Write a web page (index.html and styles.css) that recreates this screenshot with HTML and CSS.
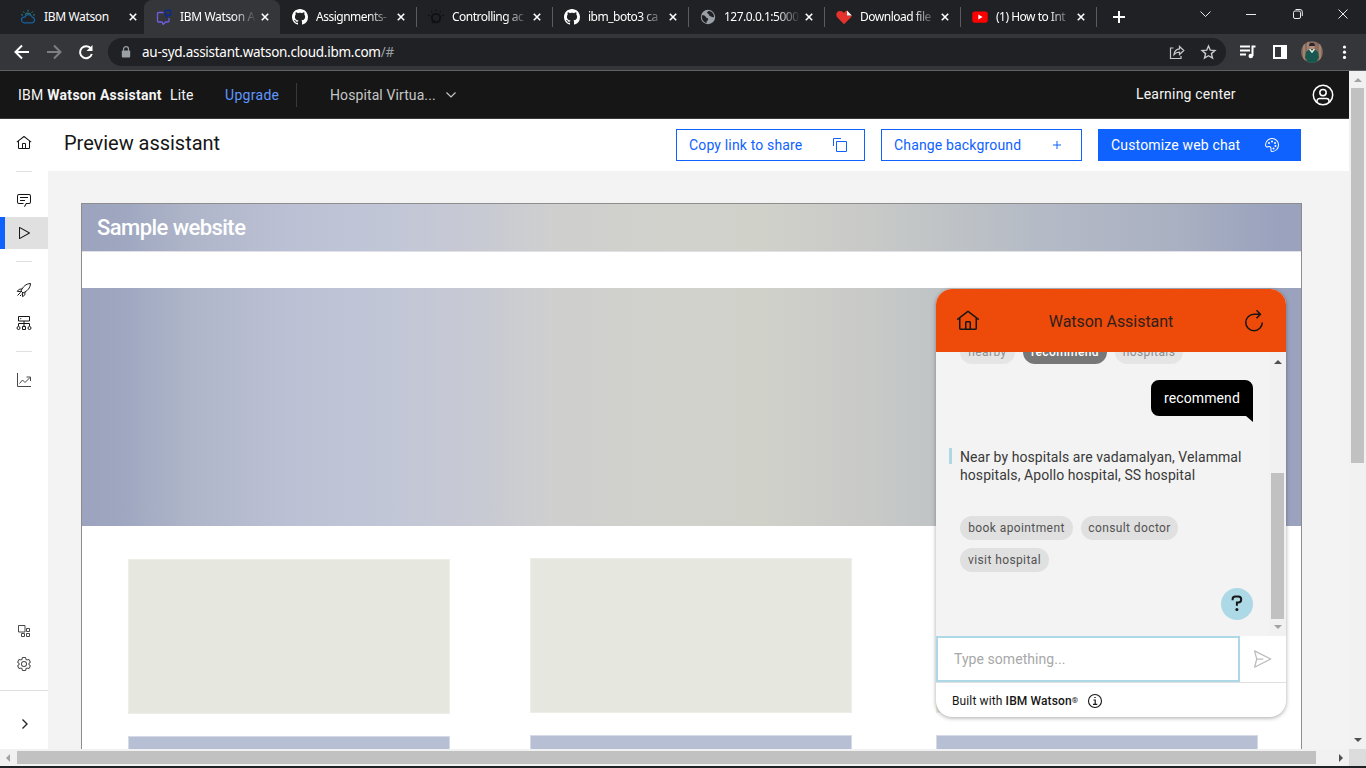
FILE: index.html
```html
<!DOCTYPE html>
<html lang="en">
<head>
<meta charset="utf-8">
<title>IBM Watson Assistant</title>
<link rel="stylesheet" href="styles.css">
</head>
<body>
<svg class="defs" width="0" height="0">
  <defs>
    <symbol id="close" viewBox="0 0 8 8"><path d="M.8.8l6.4 6.4M7.200.8L.8 7.200" stroke="#fff" stroke-width="1.6"/></symbol>
    <symbol id="github" viewBox="0 0 16 16"><path fill="#fff" d="M8 0C3.580 0 0 3.580 0 8c0 3.540 2.290 6.530 5.470 7.590.4.070.55-.17.55-.38 0-.19-.01-.82-.01-1.490-2.010.37-2.530-.49-2.690-.94-.09-.23-.48-.94-.82-1.130-.28-.15-.68-.52-.01-.53.63-.01 1.080.58 1.230.82.72 1.210 1.870.87 2.330.66.070-.52.28-.87.51-1.070-1.780-.2-3.640-.89-3.640-3.950 0-.87.31-1.590.82-2.150-.08-.2-.36-1.020.08-2.120 0 0 .67-.21 2.200.82.64-.18 1.320-.27 2-.27s1.360.09 2 .27c1.530-1.040 2.200-.82 2.200-.82.44 1.100.16 1.920.08 2.120.51.56.82 1.270.82 2.150 0 3.070-1.870 3.750-3.650 3.950.29.25.54.73.54 1.480 0 1.070-.01 1.930-.01 2.200 0 .21.15.46.55.38A8.010 8.010 0 0 0 16 8c0-4.420-3.580-8-8-8z"/></symbol>
    <symbol id="home" viewBox="0 0 32 32"><path d="M16.6123,2.2138a1.010,1.010,0,0,0-1.2427,0L1,13.4194l1.2427,1.5717L4,13.6208V26a2.0041,2.0041,0,0,0,2,2H26a2.0037,2.0037,0,0,0,2-2V13.630L29.7573,15,31,13.4282ZM18,26H14V18h4Zm2,0V18a2.0023,2.0023,0,0,0-2-2H14a2.002,2.002,0,0,0-2,2v8H6V12.0615l10-7.790,10,7.8005V26Z"/></symbol>
  </defs>
</svg>
<div class="browser">
  <div class="tabs">
    <div class="tab first">
      <svg class="fav" viewBox="0 0 16 16" fill="none" stroke-width="1.300"><path d="M4 13.800a2.900 2.900 0 0 1-.6-5.600q.8-.2 1.400 0a4 4 0 0 1 7.400-.2 3 3 0 0 1 .2 5.800z" stroke="#17609a"/><path d="M1 5.500l1.800.8M3.200 2.500l1.100 1.300M8 .8v1.800M12.800 2.500l-1.100 1.300M15 5.500l-1.800.8M5 5.500a4 4 0 0 1 6 0" stroke="#2b8a8c" stroke-width="1"/></svg>
      <span class="tab-title">IBM Watson</span><svg class="x"><use href="#close"/></svg>
    </div>
    <div class="tab active">
      <svg class="fav" viewBox="0 0 16 16" fill="none"><path d="M7.500 3.500H2.500a1 1 0 0 0-1 1v7.500a1 1 0 0 0 1 1h3.500l1.200 2.500L9.500 13H12a1 1 0 0 0 1-1V9" stroke="#6f5fe0" stroke-width="1.300"/><path d="M9.200 1.500h5.500v4.500h-2.500l-1.700 1.800V6H9.200z" stroke="#0b2a8a" stroke-width="1.300"/></svg>
      <span class="tab-title fade">IBM Watson A</span><svg class="x"><use href="#close"/></svg>
    </div>
    <div class="tab t3"><svg class="fav"><use href="#github"/></svg><span class="tab-title fade">Assignments-</span><svg class="x"><use href="#close"/></svg></div>
    <div class="tab sep">
      <svg class="fav" viewBox="0 0 16 16" fill="none" stroke="#101113"><circle cx="8" cy="9" r="4.200" stroke-width="2"/><path d="M0 6l1.800.8M3 2l1.200 1.500M8 .5v2M13 2l-1.200 1.500M16 6l-1.800.8M4 14l2.500-3" stroke-width="1.200"/></svg>
      <span class="tab-title fade">Controlling ac</span><svg class="x"><use href="#close"/></svg>
    </div>
    <div class="tab sep"><svg class="fav"><use href="#github"/></svg><span class="tab-title fade">ibm_boto3 ca</span><svg class="x"><use href="#close"/></svg></div>
    <div class="tab sep">
      <svg class="fav" viewBox="0 0 16 16"><circle cx="8" cy="8" r="7.200" fill="#9aa0a6"/><path d="M1.800 6.500c2-.5 3.500.3 4 1.500s2.500.7 2.400 2.300-1.700 1.200-1.700 3.700c-3-.7-5-3.500-4.700-7.500zM8.500 2c-1.500 1-2 2.200-.5 2.700s.5 1.800 2 2.300 1.800 1.500 4 1.200C14.200 4.500 11.500 2 8.500 2z" fill="#202124"/></svg>
      <span class="tab-title fade">127.0.0.1:5000</span><svg class="x"><use href="#close"/></svg>
    </div>
    <div class="tab sep">
      <svg class="fav" viewBox="0 0 16 16"><path d="M8 15.200L1.200 8.300C-.8 5.500.8 2 4 2c1.800 0 3 .8 4 2 .7-1.200 1.800-2.300 3-2.500v5h4.800c-.2 1-.6 1.600-1.200 2.200z" fill="#e5322d"/><path d="M11 1.500l4.800 5H11z" fill="#fff"/></svg>
      <span class="tab-title fade">Download file</span><svg class="x"><use href="#close"/></svg>
    </div>
    <div class="tab sep">
      <svg class="fav" viewBox="0 0 16 16"><rect x=".3" y="2.500" width="15.400" height="11.200" rx="2.500" fill="#f00"/><path d="M6.300 5.600v5l4.300-2.500z" fill="#fff"/></svg>
      <span class="tab-title fade">(1) How to Int</span><svg class="x"><use href="#close"/></svg>
    </div>
    <div class="newtab"><svg width="12" height="12" viewBox="0 0 12 12"><path d="M6 0v12M0 6h12" stroke="#fff" stroke-width="2"/></svg></div>
    <svg class="winctl" width="150" height="20" viewBox="0 0 150 20" fill="none" stroke="#e8eaed"><path d="M.5 7.500l5 5 5-5M46 10.500h10M93.500 8.500a1.500 1.500 0 0 1 1.500-1.500h4a1.500 1.500 0 0 1 1.500 1.500v4.500a1.500 1.500 0 0 1-1.500 1.500h-4a1.500 1.500 0 0 1-1.500-1.500zM95.500 5.500h4.500a2.300 2.300 0 0 1 2.300 2.300v4.200M138.500 5.500l9 9M147.500 5.500l-9 9"/></svg>
  </div>
  <div class="toolbar">
    <svg class="nav" width="100" height="24" viewBox="0 0 100 24" fill="none" stroke-width="2"><path d="M29 12H16M22 5.500L15.500 12l6.500 6.500" stroke="#fff"/><path d="M47 12h13M54 5.500l6.500 6.500-6.500 6.500" stroke="#7d7f83"/><path d="M91 8.800a6 6 0 1 0 .8 5.200" stroke="#fff"/><path d="M92.500 5v6h-6z" fill="#fff"/></svg>
    <div class="omnibox">
      <svg width="10" height="12" viewBox="0 0 10 12"><path d="M2.500 5V3.200a2.500 2.500 0 0 1 5 0V5" fill="none" stroke="#9aa0a6" stroke-width="1.200"/><rect x=".8" y="4.500" width="8.400" height="7" rx="1" fill="#9aa0a6"/></svg>
      <span class="url">au-syd.assistant.watson.cloud.ibm.com<span class="dim">/#</span></span>
      <svg class="acts" width="50" height="20" viewBox="0 0 50 20" fill="none" stroke="#c7c9cc" stroke-width="1.200"><path d="M5.500 6H2.500v10.500h10.500V14M6 12.500c.5-3.500 2.800-5.400 5.500-5.600V4.500l4.300 4-4.300 4v-2.400c-2.400 0-4 .7-5.500 2.400z"/><path d="M40.500 4l1.800 4.200 4.600.4-3.500 3 1.100 4.500-4-2.400-4 2.400 1.100-4.500-3.500-3 4.600-.4z" stroke-width="1.400"/></svg>
    </div>
    <svg class="ext" width="132" height="24" viewBox="0 0 132 24"><path d="M6 6.500h10M6 10.500h10M6 14.500h6M18.500 16V6.500H21.500" stroke="#fff" stroke-width="2" fill="none"/><circle cx="16.800" cy="16" r="2.300" fill="#fff"/><path d="M40 6h12v12H40z" stroke="#fff" stroke-width="2" fill="none"/><path d="M47 6h6v12h-6z" fill="#fff"/><clipPath id="av"><circle cx="78" cy="12" r="10.800"/></clipPath><g clip-path="url(#av)"><path d="M66 0h24v24H66z" fill="#8a6c5e"/><path d="M70 0v24M74 0v24M86 0v24" stroke="#a98b78" stroke-width="1.500"/><path d="M72.500 24v-5l-1.500-1 1-6 3.500-3h5l3.500 3 1 6-1.500 1v5z" fill="#17574f"/><path d="M75.500 9l2.500 3 2.500-3" stroke="#e8e6df" stroke-width="1.500" fill="none"/><circle cx="78" cy="6.500" r="2.600" fill="#b98e77"/><path d="M75 6c0-4.200 6-4.200 6 0z" fill="#252632"/></g><g fill="#fff"><circle cx="110.500" cy="7" r="1.600"/><circle cx="110.500" cy="12.200" r="1.600"/><circle cx="110.500" cy="17.400" r="1.600"/></g></svg>
  </div>
</div>
<div class="viewport">
  <div class="app">
    <header class="header">
      <span class="brand">IBM <b>Watson Assistant</b></span><span class="lite">Lite</span>
      <span class="upgrade">Upgrade</span>
      <span class="switch"><span class="sw-text">Hospital Virtua...</span><svg width="12" height="8" viewBox="0 0 12 8"><path d="M1.500 1.500L6 6l4.500-4.500" fill="none" stroke="#c6c6c6" stroke-width="1.200"/></svg></span>
      <span class="learn">Learning center</span>
      <svg class="user" width="22" height="22" viewBox="0 0 22 22" fill="none" stroke="#fff" stroke-width="1.500"><circle cx="11" cy="11" r="9.700"/><circle cx="11" cy="8.600" r="3.200"/><path d="M5 18.500v-1.500a2.500 2.500 0 0 1 2.500-2.500h7a2.500 2.500 0 0 1 2.500 2.500v1.500"/></svg>
    </header>
    <div class="body">
      <nav class="side">
        <div class="item"><svg class="ic"><use href="#home"/></svg></div>
        <hr>
        <div class="item"><svg class="ic" viewBox="0 0 32 32"><path d="M17.740,30,16,29l4-7h6a2,2,0,0,0,2-2V8a2,2,0,0,0-2-2H6A2,2,0,0,0,4,8V20a2,2,0,0,0,2,2h9v2H6a4,4,0,0,1-4-4V8A4,4,0,0,1,6,4H26a4,4,0,0,1,4,4V20a4,4,0,0,1-4,4H21.160Z"/><path d="M8 10H24V12H8zM8 16H18V18H8z"/></svg></div>
        <div class="item on"><svg class="ic" viewBox="0 0 32 32"><path d="M7,28a1,1,0,0,1-1-1V5a1,1,0,0,1,1.4819-.8763l20,11a1,1,0,0,1,0,1.7525l-20,11A1.0005,1.0005,0,0,1,7,28ZM8,6.6909V25.3088L24.9248,16Z"/></svg></div>
        <hr>
        <div class="item"><svg class="ic line" viewBox="0 0 32 32"><path d="M10 18C14 9 20 3.500 29 3c-.5 9-6 15-15 19zM12 14l-5.500.5L2.500 18.500l7.500 1M18 20l-.5 5.500L13.500 29.500l-1-7.500M3 27l6-6M8 28l2.500-2.500"/></svg></div>
        <div class="item"><svg class="ic line" viewBox="0 0 32 32"><path d="M5 3h22v9H5zM16 12v10M5 22v-5h22v5M13 23h6v6h-6z"/><circle cx="5" cy="26" r="3"/><circle cx="27" cy="26" r="3"/><circle cx="9.500" cy="7.500" r=".5"/></svg></div>
        <hr>
        <div class="item"><svg class="ic line soft" viewBox="0 0 32 32"><path d="M3 2v27h27M7 23l6-7 5 5 10-10M21 10h8v8"/></svg></div>
        <div class="grow"></div>
        <div class="item"><svg class="ic line soft" viewBox="0 0 32 32"><path d="M5 5h13v13H5zM21 11h6v6h-6zM21 21h6v6h-6zM11 21h6v6h-6z"/></svg></div>
        <div class="item"><svg class="ic gear" viewBox="0 0 32 32"><path d="M27,16.760c0-.25,0-.5,0-.76s0-.51,0-.77l1.920-1.680A2,2,0,0,0,29.300,11L26.940,7a2,2,0,0,0-1.730-1,2,2,0,0,0-.64.1l-2.430.82a11.350,11.350,0,0,0-1.310-.75l-.51-2.520a2,2,0,0,0-2-1.610H13.640a2,2,0,0,0-2,1.610l-.51,2.520a11.480,11.480,0,0,0-1.320.75L7.430,6.060A2,2,0,0,0,6.790,6,2,2,0,0,0,5.060,7L2.700,11a2,2,0,0,0,.41,2.510L5,15.240c0,.25,0,.5,0,.76s0,.51,0,.77L3.110,18.450A2,2,0,0,0,2.700,21L5.060,25a2,2,0,0,0,1.730,1,2,2,0,0,0,.64-.1l2.430-.82a11.350,11.350,0,0,0,1.310.75l.51,2.520a2,2,0,0,0,2,1.610h4.720a2,2,0,0,0,2-1.610l.51-2.520a11.480,11.480,0,0,0,1.320-.75l2.420.82a2,2,0,0,0,.64.1,2,2,0,0,0,1.730-1L29.300,21a2,2,0,0,0-.41-2.510ZM25.210,24l-3.430-1.160a8.860,8.860,0,0,1-2.710,1.570L18.360,28H13.640l-.71-3.550a9.360,9.360,0,0,1-2.700-1.570L6.790,24,4.430,20l2.720-2.400a8.900,8.900,0,0,1,0-3.130L4.430,12,6.790,8l3.430,1.160a8.860,8.860,0,0,1,2.710-1.570L13.640,4h4.720l.71,3.550a9.360,9.360,0,0,1,2.700,1.570L25.210,8,27.570,12l-2.720,2.400a8.900,8.900,0,0,1,0,3.130L27.570,20Z"/><path d="M16,22a6,6,0,1,1,6-6A5.940,5.940,0,0,1,16,22Zm0-10a3.910,3.910,0,0,0-4,4,3.910,3.910,0,0,0,4,4,3.910,3.910,0,0,0,4-4A3.910,3.910,0,0,0,16,12Z"/></svg></div>
        <div class="expand"><svg width="8" height="12" viewBox="0 0 8 12"><path d="M1.500 1.500L6 6l-4.500 4.500" fill="none" stroke="#262626" stroke-width="1.400"/></svg></div>
      </nav>
      <main class="main">
        <div class="titlebar">
          <h1>Preview assistant</h1>
          <button class="btn b1"><span>Copy link to share</span><svg width="16" height="16" viewBox="0 0 32 32"><path d="M28,10V28H10V10H28m0-2H10a2,2,0,0,0-2,2V28a2,2,0,0,0,2,2H28a2,2,0,0,0,2-2V10a2,2,0,0,0-2-2Z"/><path d="M4,18H2V4A2,2,0,0,1,4,2H18V4H4Z"/></svg></button>
          <button class="btn b2"><span>Change background</span><svg width="16" height="16" viewBox="0 0 32 32"><path d="M17 15V8h-2v7H8v2h7v7h2v-7h7v-2z"/></svg></button>
          <button class="btn b3"><span>Customize web chat</span><svg width="16" height="16" viewBox="0 0 32 32"><circle cx="10" cy="12" r="2"/><circle cx="16" cy="9" r="2"/><circle cx="22" cy="12" r="2"/><circle cx="23" cy="18" r="2"/><circle cx="19" cy="23" r="2"/><path d="M16.540,2A14,14,0,0,0,2,16a4.820,4.820,0,0,0,6.090,4.650l1.120-.31A3,3,0,0,1,13,23.240V27a3,3,0,0,0,3,3A14,14,0,0,0,30,15.460,14.050,14.050,0,0,0,16.540,2Zm8.110,22.310A11.930,11.930,0,0,1,16,28a1,1,0,0,1-1-1V23.240a5,5,0,0,0-5-5,5.070,5.070,0,0,0-1.330.18l-1.120.31A2.820,2.820,0,0,1,4,16,12,12,0,0,1,16.470,4,12.180,12.180,0,0,1,28,15.530,11.890,11.890,0,0,1,24.650,24.320Z"/></svg></button>
        </div>
        <div class="stage">
          <div class="site">
            <div class="band top">Sample website</div>
            <div class="gap"></div>
            <div class="band hero"></div>
            <div class="cards"><i></i><i></i><i></i></div>
            <div class="cards blue"><i></i><i></i><i></i></div>
          </div>
        </div>
      </main>
    </div>
    <section class="chat">
      <div class="chat-head">
        <svg width="24" height="24" fill="#161616"><use href="#home"/></svg>
        <span>Watson Assistant</span>
        <svg width="24" height="24" viewBox="0 0 32 32" fill="#161616"><path d="M26,18A10,10,0,1,1,16,8h6.1821l-3.5844,3.5854L20,13l6-6L20,1,18.5977,2.4141,22.1851,6H16A12,12,0,1,0,28,18Z"/></svg>
      </div>
      <div class="chat-mid">
        <div class="log">
          <div class="chips old"><span class="c-near">nearby</span><span class="c-rec">recommend</span><span class="c-hos">hospitals</span></div>
          <div class="sent">recommend</div>
          <div class="reply">Near by hospitals are vadamalyan, Velammal<br>hospitals, Apollo hospital, SS hospital</div>
          <div class="chips new"><span class="c-book">book apointment</span><span class="c-con">consult doctor</span><span class="c-vis">visit hospital</span></div>
          <div class="help"><svg width="12" height="18" viewBox="0 0 12 18"><path d="M1.600 5.300V4.200A2.700 2.700 0 0 1 4.300 1.500h2.900a2.900 2.900 0 0 1 0 6H5.900v3.200" fill="none" stroke="#161616" stroke-width="2"/><circle cx="5.900" cy="14.600" r="1.500" fill="#161616"/></svg></div>
        </div>
        <div class="cscroll"><i class="up"></i><b></b><i class="down"></i></div>
      </div>
      <div class="entry"><div class="field">Type something...</div><svg width="20" height="20" viewBox="0 0 32 32" fill="#bdbdbd"><path d="M30.500,15.100l-26-13a1,1,0,0,0-1.400,1.200L6.500,16,3.100,28.700a1,1,0,0,0,1.400,1.200l26-13a1,1,0,0,0,0-1.800ZM5.700,27L8.400,17H18V15H8.400L5.700,5,27.800,16Z"/></svg></div>
      <div class="foot"><span>Built with <b>IBM Watson<span class="reg">®</span></b></span><svg width="16" height="16" viewBox="0 0 16 16" fill="none" stroke="#161616"><circle cx="8" cy="8" r="6.500" stroke-width="1.100"/><path d="M6.500 7h1.700v4.200M6 11.300h4.300M7.300 4.500h1.400" stroke-width="1.200"/></svg></div>
    </section>
  </div>
  <div class="vscroll"><i class="up"></i><b></b><i class="down"></i></div>
  <div class="hscroll"><i class="left"></i><b></b><i class="right"></i></div>
</div>
</body>
</html>
```
FILE: styles.css
```css
* { box-sizing: border-box; }
body { margin: 0; width: 1366px; height: 768px; overflow: hidden; background: #202124; font-family: Roboto, sans-serif; color: #161616; display: flex; flex-direction: column; }
.defs { position: absolute; }
svg { flex: none; display: block; }

/* browser chrome */
.browser { height: 71px; background: #35363a; border-bottom: 1px solid #5f6064; font-family: "Noto Sans", sans-serif; color: #fff; }
.tabs { height: 34px; background: #202124; display: flex; }
.tab { width: 136px; display: flex; align-items: center; padding-left: 12px; font-size: 12px; letter-spacing: -.5px; }
.tab.first { width: 144px; padding-left: 20px; letter-spacing: -.35px; }
.tab.active { background: #35363a; border-radius: 8px 8px 0 0; letter-spacing: -.35px; }
.tab.sep { background: linear-gradient(#5b5c60, #5b5c60) 0 7px / 1px 20px no-repeat; }
.fav { width: 16px; height: 16px; margin-right: 8px; }
.tab-title { width: 76px; flex: none; white-space: nowrap; line-height: 20px; }
.tab-title.fade { width: 78px; margin-right: -2px; -webkit-mask: linear-gradient(90deg, #000 68%, transparent 98%); mask: linear-gradient(90deg, #000 68%, transparent 98%); }
.tab.first .tab-title { width: 81px; margin-right: -1px; }
.x { width: 8px; height: 8px; margin-left: 5px; }
.newtab { width: 44px; display: flex; align-items: center; padding-left: 17px; background: linear-gradient(#5b5c60, #5b5c60) 0 7px / 1px 20px no-repeat; }
.winctl { margin: 4px 16px 0 auto; }
.toolbar { height: 36px; display: flex; align-items: center; }
.nav { margin-right: 8px; }
.omnibox { width: 1118px; height: 28px; border-radius: 14px; background: #202124; display: flex; align-items: center; padding: 0 8px 0 13px; }
.url { font-size: 13.500px; margin-left: 11px; letter-spacing: -.27px; line-height: 20px; }
.dim { color: #9aa0a6; }
.acts { margin-left: auto; }
.ext { margin-left: 8px; }

/* page viewport with its scrollbars */
.viewport { height: 695px; display: grid; grid-template: 678px 17px / 1349px 17px; background: #dcdcdc; }
.app { position: relative; overflow: hidden; background: #f3f3f3; display: flex; flex-direction: column; }
.vscroll, .hscroll, .cscroll { background: #f1f1f1; display: flex; align-items: center; }
.vscroll, .cscroll { flex-direction: column; }
.vscroll b { width: 13px; height: 375px; background: #c1c1c1; margin-top: 6px; }
.hscroll b { height: 13px; width: 1299px; background: #c1c1c1; margin-left: 7px; }
.up, .down { border: 4px solid transparent; }
.up { border-top: 0; border-bottom-color: #a3a3a3; margin-top: 7px; }
.down { border-bottom: 0; border-top-color: #505050; margin: auto 0 7px; }
.left { border: 4px solid transparent; border-left: 0; border-right-color: #a3a3a3; margin-left: 6px; }
.right { border: 4px solid transparent; border-right: 0; border-left-color: #505050; margin: 0 6px 0 auto; }

.header { height: 48px; flex: none; background: #161616; border-bottom: 1px solid #393939; color: #f4f4f4; display: flex; align-items: center; padding-left: 18px; font-size: 14px; }
.brand { width: 144px; margin-right: 8px; letter-spacing: .27px; white-space: nowrap; }
.lite { width: 55px; letter-spacing: .2px; }
.upgrade { width: 72px; height: 24px; line-height: 24px; border-right: 1px solid #393939; color: #5e97ff; letter-spacing: .3px; }
.switch { display: flex; align-items: center; margin-left: 33px; color: #c6c6c6; }
.sw-text { width: 115px; letter-spacing: .1px; }
.learn { margin-left: auto; width: 176px; letter-spacing: .2px; padding-bottom: 1px; }
.user { margin-right: 15px; }

.body { flex: 1; min-height: 0; display: flex; }
.side { width: 48px; background: #fff; display: flex; flex-direction: column; align-items: center; padding-top: 8px; }
.item { width: 48px; height: 32px; display: flex; align-items: center; justify-content: center; margin-bottom: 1px; flex: none; }
.ic { width: 16px; height: 16px; fill: #161616; }
.line { fill: none; stroke: #161616; stroke-width: 2; }
.soft { stroke: #484848; }
.gear { fill: #484848; }
.on { background: #e0e0e0; box-shadow: inset 5px 0 #0f62fe; }
.side hr { width: 16px; height: 1px; border: 0; background: #e0e0e0; margin: 11px 0 12px; flex: none; }
.grow { flex: 1; }
.expand { width: 48px; height: 59px; flex: none; border-top: 1px solid #e0e0e0; margin-top: 9px; display: flex; align-items: center; justify-content: center; padding: 7px 0 0 2px; }
.main { flex: 1; display: flex; flex-direction: column; }
.titlebar { height: 52px; flex: none; background: #fff; display: flex; align-items: flex-start; padding: 10px 48px 0 16px; }
h1 { margin: 0; font-size: 20px; font-weight: 400; line-height: 28px; letter-spacing: -.03px; width: 612px; }
.btn { height: 32px; border: 1px solid #0f62fe; background: #fff; color: #0f62fe; fill: #0f62fe; font: 14px Roboto, sans-serif; letter-spacing: .16px; padding: 0 16px 0 12px; display: flex; align-items: center; justify-content: space-between; white-space: nowrap; }
.b1 { width: 189px; }
.b2 { width: 201px; margin-left: 16px; }
.b3 { width: 203px; margin-left: 16px; background: #0f62fe; color: #fff; fill: #fff; padding-right: 20px; }
.stage { padding: 32px 0 0 33px; }
.site { width: 1221px; height: 560px; border: 1px solid #8d8d8d; border-bottom: 0; background: #fff; }
.band { background: linear-gradient(90deg, #9ba3be 0, #9ea6c0 3%, #afb6c9 9%, #bcc0d4 17%, #c1c6d7 25%, #c8cad3 33%, #cfd0ce 39%, #d1d2cc 48%, #d0d1c9 56%, #c9cac8 64%, #c0c4c6 70%, #b4bac6 79%, #a9b0c1 90%, #9aa2be 98%); }
.top { height: 47px; color: #fff; font-size: 22px; font-weight: 500; letter-spacing: -.55px; line-height: 47px; padding-left: 15px; box-shadow: 0 1px #dfe1e6; }
.gap { height: 37px; }
.hero { height: 238px; }
.cards { display: grid; grid-template-columns: 322px 322px 322px; column-gap: 80px; padding: 32px 0 0 46px; align-items: start; }
.cards i { height: 155px; background: #e6e7de; border: 1px solid #edeee7; }
.cards i:first-child { margin-top: 1px; }
.cards.blue { padding-top: 21px; }
.cards.blue i { background: #b6bfd3; border-color: #d5dae6; height: 30px; }
.cards i:nth-child(3) { margin-left: 4px; width: 322px; }

/* chat widget floats over the previewed site */
.chat { position: absolute; left: 936px; top: 218px; width: 350px; height: 428px; border-radius: 16px; overflow: hidden; background: #fff; box-shadow: 0 1px 4px rgba(0,0,0,.35); display: flex; flex-direction: column; font-size: 14px; }
.chat-head { height: 63px; flex: none; background: #ee4b0a; display: flex; align-items: center; justify-content: space-between; padding: 1px 20px 0; font-size: 16px; letter-spacing: -.05px; color: #30201a; }
.chat-mid { height: 284px; display: flex; background: #f3f3f3; }
.log { width: 333px; padding-left: 24px; overflow: hidden; display: flex; flex-direction: column; }
.cscroll { width: 17px; padding-top: 1px; }
.cscroll b { width: 13px; height: 146px; background: #c1c1c1; margin-top: 109px; }
.cscroll .up { border-bottom-color: #505050; }
.cscroll .down { border-top-color: #a3a3a3; }
.chips { display: flex; flex-wrap: wrap; gap: 8px; font-size: 12px; color: #525252; letter-spacing: .4px; }
.chips span { height: 24px; line-height: 24px; border-radius: 12px; background: #e0e0e0; text-align: center; white-space: nowrap; }
.old { margin-top: -12px; color: #8d8d8d; }
.old span { background: #e5e5e5; }
.old .c-rec { background: #777; color: #fff; font-weight: 500; }
.c-near { width: 55px; } .c-rec { width: 84px; } .c-hos { width: 68px; }
.c-book { width: 113px; } .c-con { width: 97px; } .c-vis { width: 89px; }
.sent { align-self: flex-end; margin: 16px 16px 0 0; width: 102px; height: 42px; padding-bottom: 6px; background: #000; color: #fff; line-height: 36px; text-align: center; clip-path: path("M8 0H94a8 8 0 0 1 8 8V42L95 36H8a8 8 0 0 1-8-8V8a8 8 0 0 1 8-8z"); letter-spacing: .1px; }
.reply { margin: 26px 0 0 -11px; padding-left: 11px; line-height: 18px; white-space: nowrap; color: #393939; background: linear-gradient(#add8e6, #add8e6) 0 0 / 3px 16px no-repeat; letter-spacing: .07px; }
.new { margin-top: 32px; width: 260px; }
.help { width: 32px; height: 32px; border-radius: 50%; background: #add8e6; align-self: flex-end; margin: 16px 16px 0 0; display: flex; align-items: center; justify-content: center; }
.entry { height: 47px; border-bottom: 1px solid #e0e0e0; display: flex; align-items: center; }
.field { width: 304px; height: 46px; border: 2px solid #add8e6; line-height: 42px; padding-left: 16px; margin-right: 12px; color: #a8a8a8; letter-spacing: .06px; }
.foot { flex: 1; display: flex; align-items: center; padding: 1px 0 0 16px; font-size: 12px; }
.foot > span { width: 135px; letter-spacing: .12px; white-space: nowrap; }
.foot b { font-weight: 500; }
.reg { font-size: 8px; vertical-align: 2px; }
```
